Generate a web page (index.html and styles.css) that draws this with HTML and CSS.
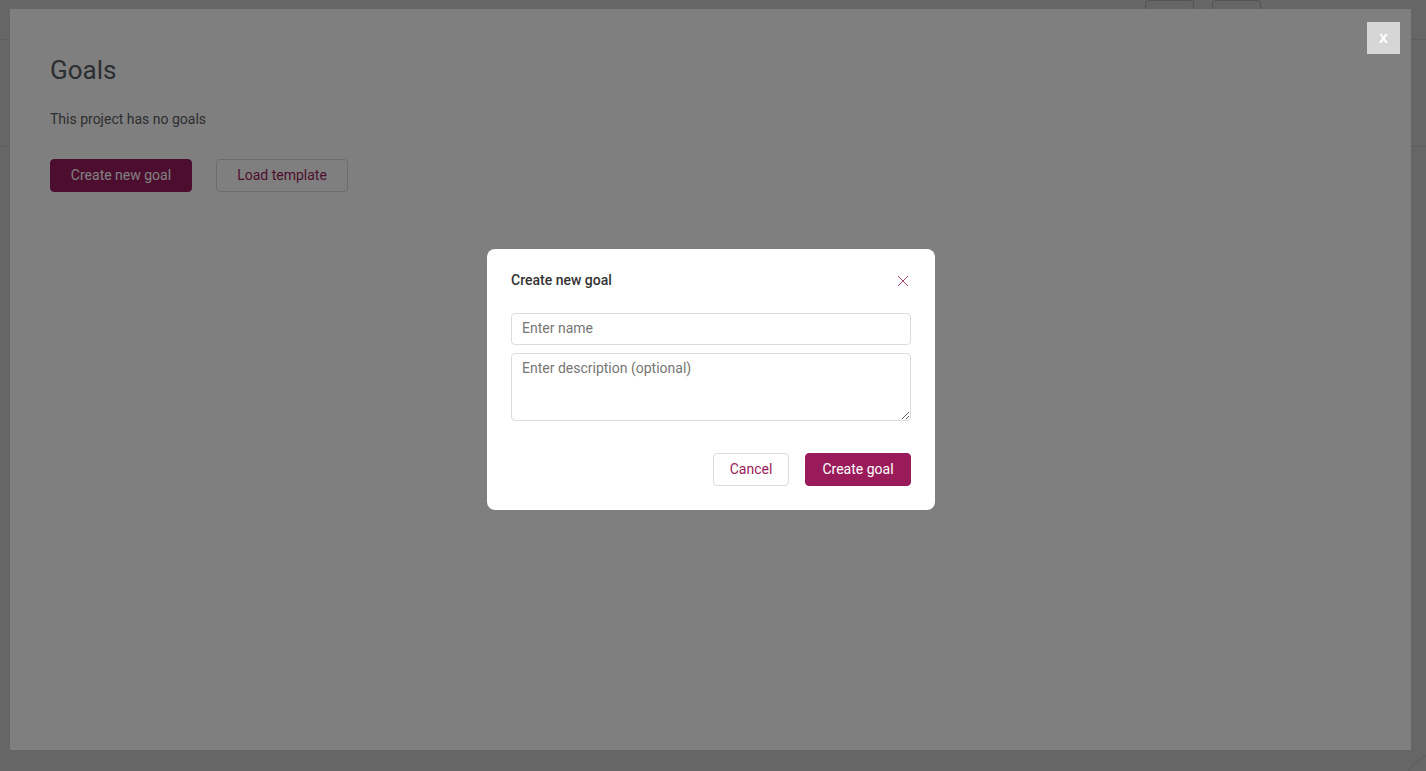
FILE: index.html
```html
<!DOCTYPE html>
<html lang="en">
<head>
<meta charset="utf-8">
<title>Goals</title>
<link rel="stylesheet" href="styles.css">
</head>
<body>
<div class="page">
  <header class="topbar">
    <div class="topbar-actions">
      <span class="top-btn"></span>
      <span class="top-btn"></span>
    </div>
  </header>
  <div class="subbar"></div>
</div>
<div class="chat-bubble"></div>
<div class="dim-light"></div>

<section class="panel">
  <h1 class="panel-title">Goals</h1>
  <p class="panel-empty">This project has no goals</p>
  <div class="panel-actions">
    <button class="btn btn-primary">Create new goal</button>
    <button class="btn btn-outline">Load template</button>
  </div>
</section>

<div class="backdrop">
  <div class="modal">
    <div class="modal-head">
      <h2 class="modal-title">Create new goal</h2>
      <button class="modal-close" aria-label="Close">
        <svg width="12" height="12" viewBox="0 0 12 12"><path d="M1 1L11 11M11 1L1 11" stroke="#a8467a" stroke-width="1" fill="none"/></svg>
      </button>
    </div>
    <div class="modal-body">
      <input class="field" type="text" placeholder="Enter name">
      <textarea class="field field-area" placeholder="Enter description (optional)"></textarea>
    </div>
    <div class="modal-foot">
      <button class="btn btn-cancel">Cancel</button>
      <button class="btn btn-create">Create goal</button>
    </div>
  </div>
</div>

<button class="panel-close">x</button>
</body>
</html>
```

FILE: styles.css
```css
* { box-sizing: border-box; }

html, body {
  margin: 0;
  height: 100%;
  overflow: hidden;
}

body {
  background: #ffffff;
  font-family: Roboto, "Liberation Sans", Arial, sans-serif;
}

.page {
  height: 100%;
}

.topbar {
  height: 40px;
  border-bottom: 1px solid #ebebeb;
  display: flex;
  justify-content: flex-end;
}

.topbar-actions {
  display: flex;
  gap: 18px;
  margin-right: 165px;
}

.top-btn {
  width: 49px;
  height: 32px;
  border: 1px solid #cfcfcf;
  border-radius: 4px;
}

.subbar {
  height: 107px;
  border-bottom: 1px solid #ebebeb;
}

.chat-bubble {
  position: fixed;
  left: 1401px;
  top: 750px;
  width: 90px;
  height: 90px;
  border-radius: 50%;
  background: #ffffff;
  border: 1px solid #e2e2e2;
}

.dim-light {
  position: fixed;
  inset: 0;
  background: rgba(0, 0, 0, 0.2);
}

.panel {
  position: fixed;
  left: 10px;
  top: 9px;
  width: 1401px;
  height: 741px;
  background: #ffffff;
  padding: 46px 40px;
}

.panel-title {
  margin: 0;
  font-size: 26px;
  font-weight: 400;
  line-height: 30px;
  color: #585c63;
}

.panel-empty {
  margin: 24px 0 0;
  font-size: 14px;
  line-height: 20px;
  color: #585c63;
}

.panel-actions {
  margin-top: 30px;
  display: flex;
  gap: 24px;
}

.btn {
  font-family: Roboto, "Liberation Sans", Arial, sans-serif;
  font-size: 14px;
  line-height: 16px;
  border-radius: 4px;
  cursor: pointer;
  padding-bottom: 2px;
}

.btn-primary {
  height: 33px;
  width: 142px;
  background: #991b5f;
  border: 1px solid #991b5f;
  color: #ffffff;
}

.btn-outline {
  height: 33px;
  width: 132px;
  background: #ffffff;
  border: 1px solid #d9d9d9;
  color: #991b5a;
}

.backdrop {
  position: fixed;
  inset: 0;
  background: rgba(0, 0, 0, 0.5);
  display: flex;
  justify-content: center;
  align-items: flex-start;
  padding: 249px 4px 0 0;
}

.modal {
  width: 448px;
  height: 261px;
  background: #ffffff;
  border-radius: 8px;
  padding: 23px 24px 24px;
  display: flex;
  flex-direction: column;
}

.modal-head {
  display: flex;
  justify-content: space-between;
  align-items: center;
  height: 16px;
}

.modal-title {
  margin: 0;
  font-size: 14px;
  font-weight: 500;
  color: #333333;
  line-height: 16px;
}

.modal-close {
  background: none;
  border: 0;
  padding: 0;
  width: 12px;
  height: 12px;
  margin-right: 2px;
  margin-top: 2px;
  display: flex;
  cursor: pointer;
}

.modal-body {
  margin-top: 25px;
  display: flex;
  flex-direction: column;
  gap: 8px;
}

.field {
  width: 400px;
  height: 32px;
  border: 1px solid #dcdcdc;
  border-radius: 4px;
  padding: 5px 10px 7px;
  font-family: Roboto, "Liberation Sans", Arial, sans-serif;
  font-size: 14px;
  line-height: 18px;
  color: #333333;
  outline: none;
}

.field::placeholder {
  color: #767676;
}

.field-area {
  height: 68px;
  resize: vertical;
}

.modal-foot {
  margin-top: 32px;
  display: flex;
  justify-content: flex-end;
  gap: 16px;
}

.btn-cancel {
  height: 33px;
  width: 76px;
  background: #ffffff;
  border: 1px solid #dcdcdc;
  color: #991b5a;
}

.btn-create {
  height: 33px;
  width: 106px;
  background: #991b5a;
  border: 1px solid #991b5a;
  color: #ffffff;
}

.panel-close {
  position: fixed;
  left: 1367px;
  top: 22px;
  width: 33px;
  height: 32px;
  background: #d6d6d6;
  border: 0;
  color: #ffffff;
  font-family: "Liberation Sans", Arial, sans-serif;
  font-weight: 700;
  font-size: 16px;
  padding: 0;
  cursor: pointer;
}
```
